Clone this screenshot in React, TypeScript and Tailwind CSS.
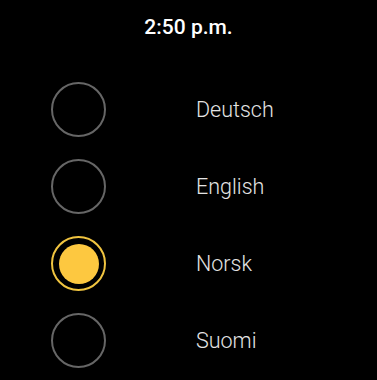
const languages = [
  { name: 'Deutsch', selected: false },
  { name: 'English', selected: false },
  { name: 'Norsk', selected: true },
  { name: 'Suomi', selected: false },
]

function Radio({ selected }: { selected: boolean }) {
  if (selected) {
    return (
      <div className="w-[55px] h-[55px] rounded-full border-2 border-[#f0c440] flex items-center justify-center shrink-0">
        <div className="w-[40px] h-[40px] rounded-full bg-[#fdc840]" />
      </div>
    )
  }
  return <div className="w-[55px] h-[55px] rounded-full border-2 border-[#666666] shrink-0" />
}

export default function App() {
  return (
    <div className="w-[377px] h-[380px] bg-black overflow-hidden" style={{ fontFamily: 'Roboto, sans-serif' }}>
      <div className="pt-[15px] text-center text-[21px] leading-[24px] font-medium text-white">2:50 p.m.</div>
      <div className="mt-[32px] flex flex-col">
        {languages.map((lang) => (
          <div key={lang.name} className="h-[77px] flex items-center pl-[51px]">
            <Radio selected={lang.selected} />
            <span className="ml-[90px] text-[21.5px] font-light text-[#e4e4e4] leading-none">{lang.name}</span>
          </div>
        ))}
      </div>
    </div>
  )
}
